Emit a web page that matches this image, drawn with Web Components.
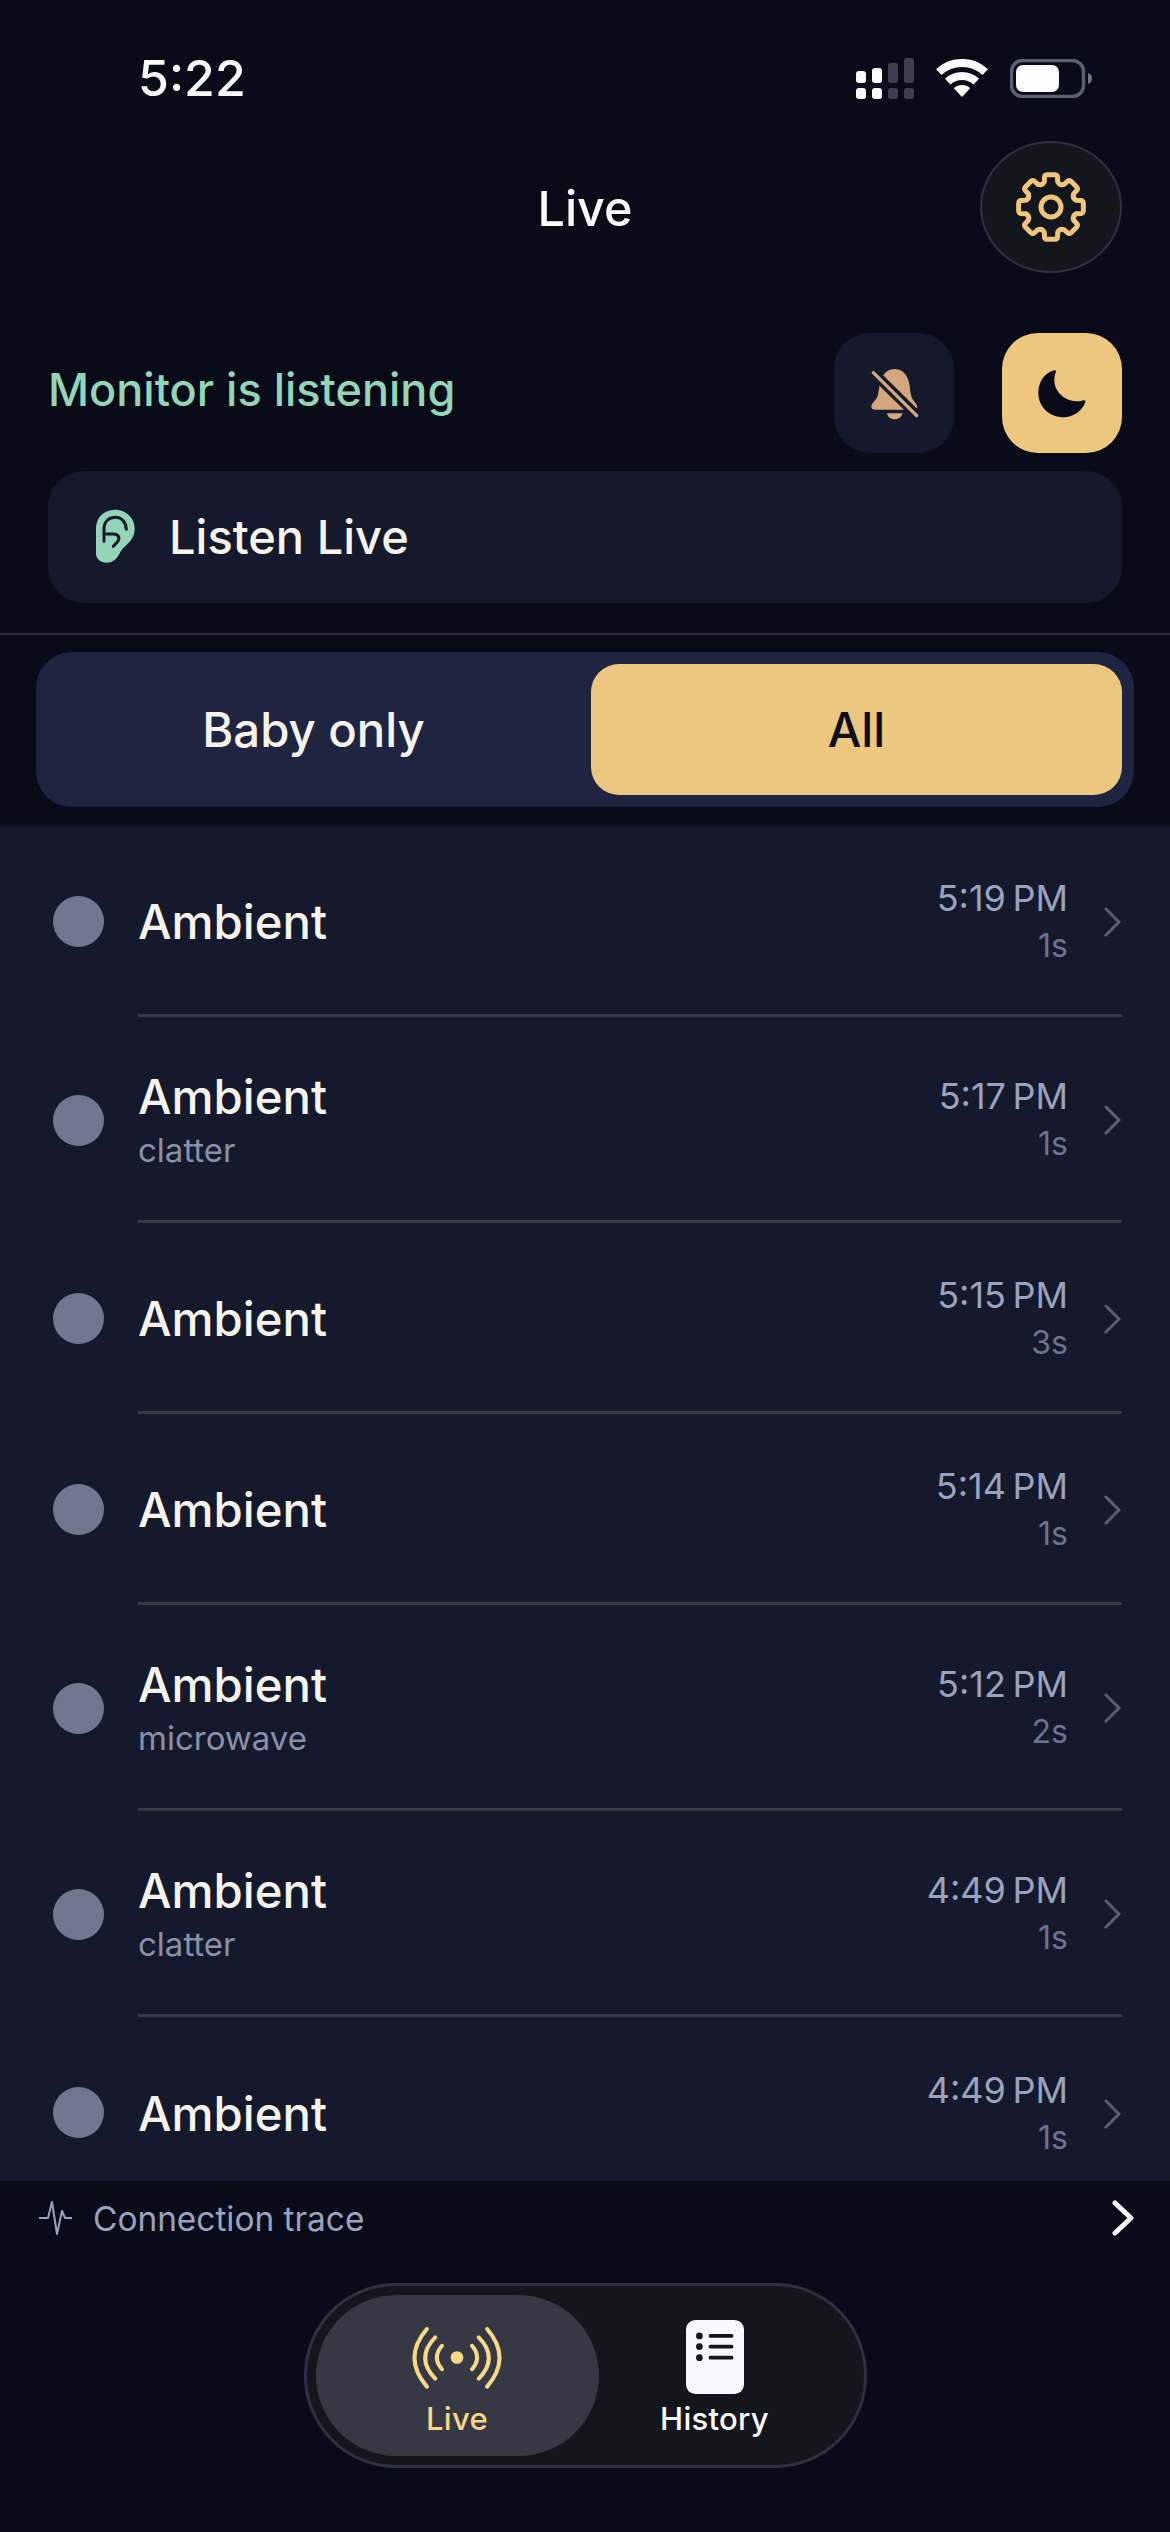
<!doctype html>
<html><head><meta charset="utf-8">
<style>
html,body{margin:0;padding:0;background:#090c18}
body{font-family:Inter,"Noto Sans",sans-serif;width:1170px;height:2532px;overflow:hidden}
</style></head><body>
<monitor-app>
  <status-bar slot="top" time="5:22"></status-bar>
  <page-header slot="top" title="Live"></page-header>
  <monitor-row slot="top" label="Monitor is listening"></monitor-row>
  <listen-card slot="top" label="Listen Live"></listen-card>
  <filter-seg slot="top" left="Baby only" right="All"></filter-seg>
  <event-list>
    <event-row time="5:19&#8201;PM" dur="1s"></event-row>
    <event-row time="5:17&#8201;PM" dur="1s" sub="clatter"></event-row>
    <event-row time="5:15&#8201;PM" dur="3s"></event-row>
    <event-row time="5:14&#8201;PM" dur="1s"></event-row>
    <event-row time="5:12&#8201;PM" dur="2s" sub="microwave"></event-row>
    <event-row time="4:49&#8201;PM" dur="1s" sub="clatter"></event-row>
    <event-row time="4:49&#8201;PM" dur="1s"></event-row>
  </event-list>
  <connection-trace slot="bottom" label="Connection trace"></connection-trace>
  <tab-bar slot="bottom"></tab-bar>
</monitor-app>
<script>
const FONT = 'Inter,"Noto Sans",sans-serif';
function def(name, html){
  customElements.define(name, class extends HTMLElement{
    constructor(){ super(); this.attachShadow({mode:'open'}); }
    connectedCallback(){
      const a = n => this.getAttribute(n) || '';
      this.shadowRoot.innerHTML = typeof html === 'function' ? html(a, this) : html;
    }
  });
}
function gearPath(cx,cy){
  const P=(r,d)=>{const t=d*Math.PI/180;return (cx+r*Math.cos(t)).toFixed(2)+' '+(cy+r*Math.sin(t)).toFixed(2)};
  const out=32, root=24.5; let d='';
  for(let i=0;i<8;i++){
    const a=-90+i*45;
    d+=(i?'L':'M')+P(root+1.5,a-15)+'L'+P(out-1,a-12)+'Q'+P(out+0.6,a-11)+' '+P(out+0.6,a-7)+'L'+P(out+0.6,a+7)+'Q'+P(out+0.6,a+11)+' '+P(out-1,a+12)+'L'+P(root+1.5,a+15)+'Q'+P(root-1.5,a+22.5)+' '+P(root+1.5,a+30);
  }
  return d+'Z';
}
def('monitor-app',`<style>
:host{display:flex;flex-direction:column;width:1170px;height:2532px;background:#090c18;color:#f5f3ec;font-family:${FONT}}
.list{display:block;flex:none;height:1355px;overflow:hidden}
</style><slot name="top"></slot><div class="list"><slot></slot></div><slot name="bottom"></slot>`);

def('status-bar',a=>`<style>
:host{display:flex;box-sizing:border-box;height:141px;padding:51px 78px 0 138px;justify-content:space-between;align-items:flex-start}
.t{font:550 50px/54px ${FONT};color:#fbfbfd;letter-spacing:0}
.i{display:flex;gap:22px;align-items:center;height:54px}
svg{display:block}
</style><div class="t">${a('time')}</div><div class="i">
<svg width="58" height="41" viewBox="0 0 58 41"><g fill="#fbfcff"><rect x="0" y="13" width="10" height="12" rx="3"/><rect x="16" y="10" width="10" height="15" rx="3"/><rect x="0" y="30" width="10" height="11" rx="3"/><rect x="16" y="30" width="10" height="11" rx="3"/></g><g fill="#3d3f4d"><rect x="32" y="5" width="10" height="20" rx="3"/><rect x="48" y="0" width="10" height="25" rx="3"/><rect x="32" y="30" width="10" height="11" rx="3"/><rect x="48" y="30" width="10" height="11" rx="3"/></g></svg>
<svg width="52" height="38" viewBox="0 0 52 38" fill="none" stroke="#fbfcff" stroke-width="8"><path d="M2.8 13.1A34 34 0 0 1 49.2 13.1"/><path d="M11.7 22.6A21 21 0 0 1 40.3 22.6"/><path d="M26 38L17.8 29.2A12 12 0 0 1 34.2 29.2Z" fill="#fbfcff" stroke="none"/></svg>
<svg width="82" height="39" viewBox="0 0 82 39"><rect x="1.5" y="1.5" width="72" height="36" rx="11" fill="none" stroke="#5a6070" stroke-width="3.5"/><rect x="6" y="6" width="43" height="27" rx="7" fill="#fbfcff"/><path d="M78 14C81 15 82 17 82 19.500S81 24 78 25Z" fill="#70778f"/></svg>
</div>`);

def('page-header',a=>`<style>
:host{display:grid;grid-template-columns:1fr auto 1fr;height:132px;padding:0 48px;align-items:center}
h1{grid-column:2;margin:0;padding-top:3px;font:550 48.500px/60px ${FONT};color:#fbfbfd}
.b{grid-column:3;justify-self:end;box-sizing:border-box;width:142px;height:132px;border-radius:50%;background:#13161d;border:2.500px solid #2e3142;display:flex;align-items:center;justify-content:center}
svg{display:block}
</style><h1>${a('title')}</h1><div class="b"><svg width="74" height="74" viewBox="0 0 74 74" fill="none" stroke="#eec57a" stroke-width="5" stroke-linejoin="round"><path d="${gearPath(37,37)}"/><circle cx="37" cy="37" r="10"/></svg></div>`);

def('monitor-row',a=>`<style>
:host{display:flex;align-items:center;height:120px;margin-top:60px;padding:0 48px 0 48px;gap:48px}
.l{flex:1;font:500 45px/56px ${FONT};color:#94d5b8;padding-bottom:6px}
.b{width:120px;height:120px;border-radius:36px;background:#141a2c;display:flex;align-items:center;justify-content:center}
.b.m{background:#edc77f}
svg{display:block}
</style><div class="l">${a('label')}</div>
<div class="b"><svg width="60" height="60" viewBox="191 156 180 180" fill="none" stroke-linecap="round"><path d="M283 174C262 174 250 188 243 205C236 222 236 240 232 255C228 268 213 276 213 287C213 292 218 296 225 296H340C347 296 352 292 350 284C346 274 336 268 333 255C328 240 330 222 323 205C316 188 304 174 283 174Z" fill="#d4a77c"/><path d="M260 307H306C304 318 295 325 283 325C271 325 262 318 260 307Z" fill="#d4a77c"/><path d="M222 188L348 312" stroke="#141a2c" stroke-width="30"/><path d="M219 185L349 314" stroke="#d4a77c" stroke-width="10"/></svg></div>
<div class="b m"><svg width="60" height="60" viewBox="695 160 180 180"><path d="M762 182C730 190 714 220 714 250C714 292 748 323 790 323C820 323 848 302 856 275C853 271 850 272 845 273C800 282 762 250 762 212C762 200 764 195 767 186C767 183 765 181 762 182Z" fill="#090c18"/></svg></div>`);

def('listen-card',a=>`<style>
:host{display:flex;align-items:center;box-sizing:border-box;height:132px;margin:18px 48px 0;padding:0 0 0 46px;background:#141a2c;border-radius:36px;gap:31px}
.l{font:450 47px/56px ${FONT};color:#f5f3ec}
svg{display:block}
</style><svg width="44" height="58" viewBox="102 88 132 174" fill="none"><path d="M165 93C130 93 108 118 108 150V225C108 240 122 252 140 252C160 252 172 238 180 222C190 200 224 190 224 150C224 118 198 93 165 93Z" fill="#94d5b8"/><g stroke="#141a2c" stroke-width="9" stroke-linecap="round" stroke-linejoin="round"><path d="M132 188V150C132 128 148 116 166 116C186 116 198 132 199 152"/><path d="M134 166H160C175 166 182 178 172 190L160 203"/></g></svg><div class="l">${a('label')}</div>`);

def('filter-seg',a=>`<style>
:host{display:block;margin-top:30px;border-top:2px solid #262a33;padding:17px 36px 19px}
.w{display:grid;grid-template-columns:1fr 1fr;gap:12px;padding:12px;background:#1f2540;border-radius:36px;height:155px;box-sizing:border-box}
.o{display:flex;align-items:center;justify-content:center;border-radius:28px;font:500 47.300px/56px ${FONT};color:#f5f3ec}
.o.on{background:#edc77f;color:#0c0f1a}
</style><div class="w"><div class="o">${a('left')}</div><div class="o on">${a('right')}</div></div>`);

def('event-list',`<style>:host{display:block;background:#141a2c}</style><slot></slot>`);

def('event-row',a=>`<style>
:host{display:flex;align-items:stretch;box-sizing:border-box;height:${a('sub')?206:191}px;padding:0 48px 0 53px}
:host(:last-child) .c{border-bottom:none}
.d{flex:none;width:51px;height:51px;border-radius:50%;background:#70778f;align-self:center;margin-right:34px}
.c{flex:1;display:flex;align-items:center;border-bottom:3px solid #353845;padding-top:3px;box-sizing:border-box;min-width:0;padding-right:1px}
.m{flex:1;display:flex;flex-direction:column}
.n{font:450 47.300px/56px ${FONT};color:#f5f3ec}
.s{font:400 33px/41px ${FONT};color:#8a90a8;margin-top:4.500px}
.r{display:flex;flex-direction:column;align-items:flex-end;margin-right:36px}
.t{font:400 36px/47px ${FONT};color:#9aa2bd}
.u{font:400 32px/47px ${FONT};color:#6d7390}
svg{display:block;flex:none}
</style><div class="d"></div><div class="c"><div class="m"><div class="n">Ambient</div>${a('sub')?`<div class="s">${a('sub')}</div>`:''}</div><div class="r"><div class="t">${a('time')}</div><div class="u">${a('dur')}</div></div><svg width="17" height="30" viewBox="0 0 17 30" fill="none" stroke="#5a5f70" stroke-width="3" stroke-linecap="round" stroke-linejoin="round"><path d="M2 2L15 15L2 28"/></svg></div>`);

def('connection-trace',a=>`<style>
:host{display:flex;align-items:center;height:74px;padding:0 35px 0 39px;gap:21px}
.l{flex:1;font:400 33.400px/44px ${FONT};color:#9aa2bd;padding-top:1px}
svg{display:block}
</style><svg width="33" height="34" viewBox="0 0 33 34" fill="none" stroke="#9aa2bd" stroke-width="2" stroke-linejoin="round"><path d="M0 17H9L13 1L18 33L23 10L26 17H33"/></svg><div class="l">${a('label')}</div><svg width="24" height="36" viewBox="0 0 24 36" fill="none" stroke="#fbfcff" stroke-width="5" stroke-linecap="round" stroke-linejoin="round"><path d="M4 3L20 18L4 33"/></svg>`);

def('tab-bar',`<style>
:host{display:flex;box-sizing:border-box;width:563px;height:185px;margin:28px auto 0;padding:9px;background:#13161d;border:3px solid #2e3142;border-radius:92px}
.t{display:flex;flex-direction:column;align-items:center;justify-content:flex-start;border-radius:82px}
.a{width:283px;height:161px;background:#363844;color:#f9d888}
.h{flex:1;color:#fbfcff;padding-right:24px}
.ic{height:84px;display:flex;align-items:center;justify-content:center;margin-top:20px}
.l{font:500 31px/38px ${FONT};margin-top:1px;letter-spacing:.3px}
svg{display:block}
</style><div class="t a"><div class="ic"><svg width="94" height="66" viewBox="85 155 280 197" fill="none" stroke="#f9d888" stroke-width="12" stroke-linecap="round"><path d="M135 170Q61 256 135 342M160 195Q100 256 160 318M180 220Q150 255 180 290M315 170Q389 256 315 342M290 195Q350 256 290 318M270 220Q300 255 270 290"/><circle cx="225" cy="255" r="19" fill="#f9d888" stroke="none"/></svg></div><div class="l">Live</div></div>
<div class="t h"><div class="ic"><svg width="58" height="74" viewBox="912 145 173 220"><rect x="912" y="145" width="173" height="220" rx="28" fill="#f8f9fb"/><g fill="#13161d"><circle cx="952" cy="192" r="10"/><circle cx="952" cy="224" r="10"/><circle cx="952" cy="257" r="10"/></g><path d="M985 192H1048M985 224H1048M985 257H1048" stroke="#13161d" stroke-width="11" stroke-linecap="round"/></svg></div><div class="l">History</div></div>`);
</script>
</body></html>
